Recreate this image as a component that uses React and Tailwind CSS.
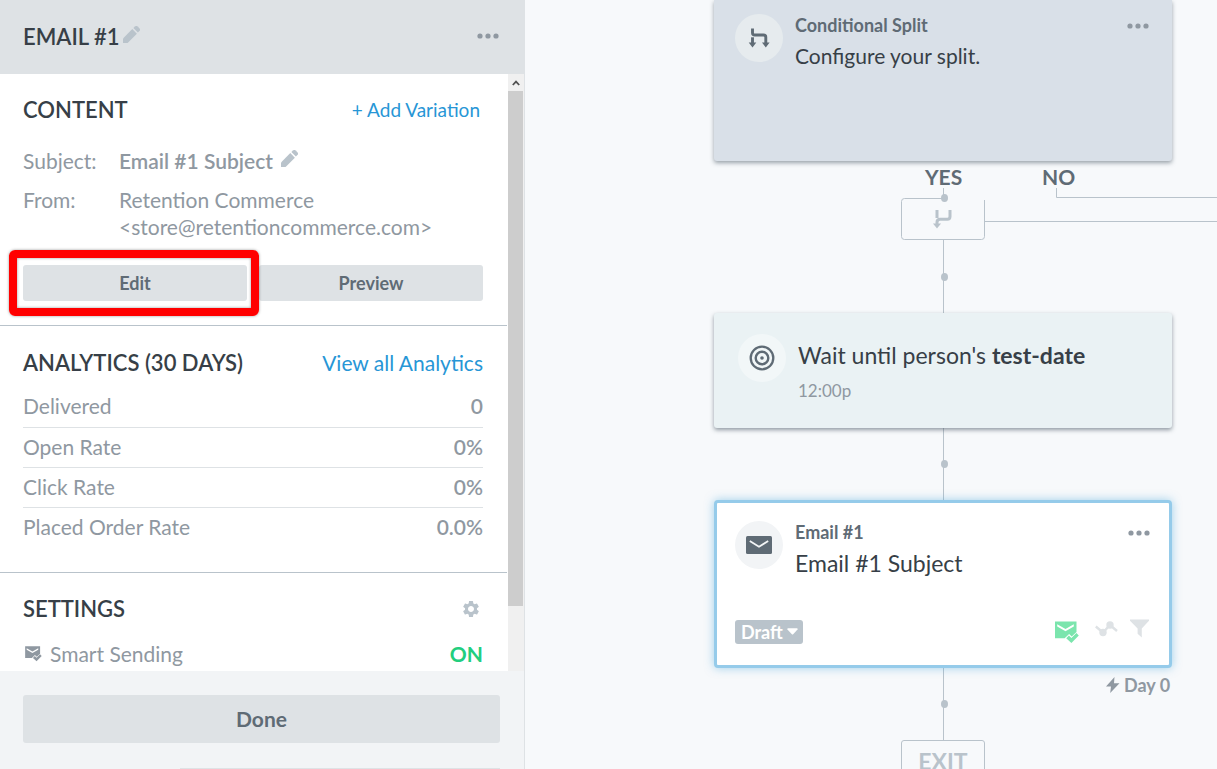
import { MdSettings } from "react-icons/md";

function Pencil() {
  return (
    <svg width="17" height="17" viewBox="0 0 17 17" fill="#b9c3cb" aria-hidden="true">
      <path d="M0 17v-4.6L9.300 3.100l4.600 4.600L4.600 17z" />
      <path d="M10.400 2.100L11.900.6a2 2 0 0 1 2.800 0l1.700 1.700a2 2 0 0 1 0 2.800l-1.500 1.500z" />
    </svg>
  );
}

function Dots() {
  return (
    <svg width="22" height="6" viewBox="0 0 22 6" fill="#8f98a1" aria-hidden="true">
      <circle cx="3" cy="3" r="2.6" />
      <circle cx="11" cy="3" r="2.6" />
      <circle cx="19" cy="3" r="2.6" />
    </svg>
  );
}

function MailCheck({ className }) {
  return (
    <svg viewBox="0 0 24 23" fill="currentColor" className={className} aria-hidden="true">
      <path fillRule="evenodd" d="M0 0.5h21.5v10.5l-4.8 4.6-2.6-2.6-4.4 4.3H0zM2.2 3.2v2.2l8.3 4.8 8.3-4.8V3.2l-8.3 4.8z" />
      <path d="M11.2 17.2l2.7-2.7 2.5 2.5 5-5 2.4 2.4-7.4 7.6z" />
    </svg>
  );
}

function Mail() {
  return (
    <svg width="26" height="18" viewBox="0 0 26 18" aria-hidden="true">
      <rect width="26" height="18" rx="1.5" fill="#5f6b75" />
      <path d="M3.8 5l9.2 5.8L22.2 5" fill="none" stroke="#f3f5f6" strokeWidth="1.8" />
    </svg>
  );
}

function SplitIcon() {
  return (
    <svg width="22" height="20" viewBox="0 0 22 20" aria-hidden="true">
      <path d="M4.500 0.500v4.200q0 2.300 2.300 2.300h8.700q2.300 0 2.300 2.300V15.500" fill="none" stroke="#5f6b75" strokeWidth="2.900" />
      <path d="M4.500 9.300v6" stroke="#5f6b75" strokeWidth="2.900" />
      <path d="M.7 14.600h7.600L4.500 19.500zM14 14.600h7.600L17.800 19.500z" fill="#5f6b75" />
    </svg>
  );
}

function MergeIcon() {
  return (
    <svg width="20" height="20" viewBox="0 0 20 20" aria-hidden="true">
      <path d="M4 1v8M17 1v6.500q0 2.700-2.700 2.700H7q-3 0-3 3V15" fill="none" stroke="#b9c3cb" strokeWidth="3" />
      <path d="M0 14.400h8L4 19.400z" fill="#b9c3cb" />
    </svg>
  );
}

function Target() {
  return (
    <svg width="26" height="26" viewBox="0 0 26 26" fill="none" stroke="#5f6b75" aria-hidden="true">
      <circle cx="13" cy="13" r="11.3" strokeWidth="2.3" />
      <circle cx="13" cy="13" r="6.3" strokeWidth="2.4" />
      <circle cx="13" cy="13" r="1.8" fill="#5f6b75" stroke="none" />
    </svg>
  );
}

const stats = [
  ["Delivered", "0"],
  ["Open Rate", "0%"],
  ["Click Rate", "0%"],
  ["Placed Order Rate", "0.0%"],
];

function SectionTitle({ children }) {
  return <h2 className="text-[22px] leading-[27px] font-semibold text-[#373f47]">{children}</h2>;
}

function Sidebar() {
  return (
    <aside className="flex w-[525px] shrink-0 flex-col border-r border-[#dee2e5] bg-[#f2f4f6]">
      <header className="flex h-[74px] shrink-0 items-center justify-between bg-[#dee2e5] pr-[25px] pb-[2px] pl-[23px]">
        <div className="flex items-center gap-1">
          <h1 className="text-[22px] leading-[27px] font-semibold text-[#373f47]">EMAIL #1</h1>
          <button aria-label="Rename email" className="pb-1"><Pencil /></button>
        </div>
        <button aria-label="Email options"><Dots /></button>
      </header>

      <div className="flex min-h-0 flex-1">
        <div className="min-w-0 flex-1 overflow-hidden bg-white text-[21px] leading-[27px] text-[#8f98a1]">
          <section className="border-b border-[#b9c3cb] pt-[22px] pr-6 pb-6 pl-[23px]">
            <div className="flex items-center justify-between pr-[3px]">
              <SectionTitle>CONTENT</SectionTitle>
              <a href="#variation" className="text-[19px] text-[#2796d6]">+ Add Variation</a>
            </div>
            <dl className="mt-6 grid grid-cols-[96px_1fr] gap-y-3">
              <dt>Subject:</dt>
              <dd className="flex items-center gap-2 font-semibold">
                Email #1 Subject
                <button aria-label="Edit subject" className="pb-1"><Pencil /></button>
              </dd>
              <dt>From:</dt>
              <dd>Retention Commerce<br />&lt;store@retentioncommerce.com&gt;</dd>
            </dl>
            <div className="mt-[25px] grid grid-cols-2 gap-3 text-lg font-bold text-[#5f6b75]">
              <div className="relative">
                <button className="h-9 w-full rounded-[3px] bg-[#dee2e5]">Edit</button>
                <div className="pointer-events-none absolute -inset-y-[15px] -right-3 -left-[14px] rounded-md border-8 border-[#ff0000] shadow-[0_0_3px_rgba(0,0,0,0.4),inset_0_0_3px_rgba(0,0,0,0.4)]" />
              </div>
              <button className="h-9 rounded-[3px] bg-[#dee2e5]">Preview</button>
            </div>
          </section>

          <section className="border-b border-[#b9c3cb] pt-[23px] pr-6 pb-[25px] pl-[23px]">
            <div className="flex items-center justify-between">
              <SectionTitle>ANALYTICS (30 DAYS)</SectionTitle>
              <a href="#analytics" className="text-[#2796d6]">View all Analytics</a>
            </div>
            <table className="mt-[11px] w-full border-collapse">
              <tbody>
                {stats.map(([name, value]) => (
                  <tr key={name} className="h-10 border-b border-[#dee2e5] last:border-0">
                    <th scope="row" className="p-0 pb-[2px] text-left font-normal">{name}</th>
                    <td className="p-0 pb-[2px] text-right font-semibold">{value}</td>
                  </tr>
                ))}
              </tbody>
            </table>
          </section>

          <section className="pt-[22px] pr-6 pl-[23px]">
            <div className="flex items-center justify-between pr-[2px]">
              <SectionTitle>SETTINGS</SectionTitle>
              <button aria-label="Settings"><MdSettings size={20} color="#b9c3cb" /></button>
            </div>
            <div className="mt-[18px] flex items-center justify-between">
              <span className="flex items-center gap-2"><MailCheck className="ml-[2px] h-4 w-[17px]" />Smart Sending</span>
              <span className="font-bold text-[#22ce7e]">ON</span>
            </div>
          </section>
        </div>
        <div className="flex w-[17px] shrink-0 flex-col border-l border-white bg-[#f0f0f0]" aria-hidden="true">
          <div className="flex h-[17px] w-[15px] shrink-0 items-center justify-center">
            <svg width="8" height="6" viewBox="0 0 8 6" fill="none" stroke="#505050" strokeWidth="1.8"><path d="M.8 5L4 1.6 7.2 5" /></svg>
          </div>
          <div className="h-[515px] w-[15px] bg-[#cdcdcd]" />
        </div>
      </div>

      <footer className="flex h-[98px] shrink-0 flex-col gap-[25px] overflow-hidden pt-6 pr-6 pl-[23px]">
        <button className="h-12 shrink-0 rounded-[3px] bg-[#dee2e5] text-[21px] font-bold text-[#5f6b75]">Done</button>
        <div className="ml-[157px] h-px bg-[#dee2e5]" />
      </footer>
    </aside>
  );
}

function Canvas() {
  return (
    <main className="relative min-w-0 flex-1 overflow-hidden bg-[#f7f9fb] text-[#373f47]">
      <svg className="absolute top-0 left-0 h-full w-full" fill="none" stroke="#b9c3cb" aria-hidden="true">
        <path d="M418.5 188v10M418.5 240v500" />
        <path d="M418 198.5H379.5Q376.5 198.5 376.5 201.5V236.5Q376.5 239.5 379.5 239.5H456.5Q459.5 239.5 459.5 236.5V200M460 221.5H3000M531.5 188V197.5H3000" />
        <g fill="#b9c3cb" stroke="none">
          <ellipse cx="419.5" cy="198" rx="3.5" ry="4" />
          <ellipse cx="419.5" cy="277" rx="3.5" ry="4" />
          <ellipse cx="419.5" cy="464" rx="3.5" ry="4" />
          <ellipse cx="419.5" cy="704" rx="3.5" ry="4" />
        </g>
      </svg>

      <article className="absolute top-0 left-[189px] flex h-[161px] w-[458px] gap-3 rounded-b-[3px] bg-[#d9e0e8] pt-[14px] pr-[23px] pl-[21px] shadow-[0_2px_4px_rgba(60,75,90,0.5)]">
        <div className="flex size-12 shrink-0 items-center justify-center rounded-full bg-[#e6ebee]"><SplitIcon /></div>
        <div className="flex-1">
          <h3 className="text-lg leading-[22px] font-bold text-[#5f6b75]">Conditional Split</h3>
          <p className="mt-[6px] text-[21px] leading-7">Configure your split.</p>
        </div>
        <button aria-label="Split options" className="h-6"><Dots /></button>
      </article>

      <span className="absolute top-[165px] left-[400px] text-[21px] leading-6 font-bold text-[#5f6b75]">YES</span>
      <span className="absolute top-[165px] left-[517px] text-[21px] leading-6 font-bold text-[#5f6b75]">NO</span>
      <div className="absolute top-[209px] left-[408px]"><MergeIcon /></div>

      <article className="absolute top-[313px] left-[189px] flex h-[115px] w-[458px] gap-3 rounded-[3px] bg-[#eaf2f4] pt-[21px] pl-6 shadow-[0_2px_4px_rgba(60,75,90,0.55)]">
        <div className="flex size-12 shrink-0 items-center justify-center rounded-full bg-[#f2f7f8]"><Target /></div>
        <div>
          <h3 className="text-[23px] leading-[42px]">Wait until person's <b>test-date</b></h3>
          <p className="mt-[3px] text-[17px] leading-6 text-[#8f98a1]">12:00p</p>
        </div>
      </article>

      <article className="absolute top-[500px] left-[189px] flex h-[168px] w-[458px] flex-col justify-between rounded border-[3px] border-[#95cbea] bg-white px-[18px] pt-[18px] pb-[21px] shadow-[0_0_10px_rgba(70,165,220,0.5)]">
        <div className="flex gap-3">
          <div className="flex size-12 shrink-0 items-center justify-center rounded-full bg-[#f2f4f6]"><Mail /></div>
          <div className="flex-1">
            <h3 className="text-lg leading-[22px] font-bold text-[#5f6b75]">Email #1</h3>
            <p className="mt-[6px] text-[23px] leading-7">Email #1 Subject</p>
          </div>
          <button aria-label="Email card options" className="mr-px h-6"><Dots /></button>
        </div>
        <div className="flex items-center justify-between">
          <button className="flex h-6 items-center gap-1 rounded-[3px] bg-[#b9c3cb] pr-[5px] pl-[6px] text-lg font-bold text-white">
            Draft
            <svg width="11" height="7" viewBox="0 0 12 7" fill="currentColor" aria-hidden="true"><path d="M1 0h10q1 .3.5 1.200L6.700 6.500q-.7.7-1.400 0L.5 1.200Q0 .3 1 0z" /></svg>
          </button>
          <div className="flex items-start gap-3 pr-[2px]">
            <MailCheck className="mt-[2px] mr-1 h-[23px] w-6 text-[#7be5ad]" />
            <svg width="23" height="16" viewBox="0 0 23 16" className="mt-[2px]" aria-hidden="true">
              <path d="M.8 5.5L8 11.5 15 4l7 6" fill="none" stroke="#dee2e5" strokeWidth="2.4" />
              <circle cx="8" cy="11.5" r="3.7" fill="#dee2e5" />
              <circle cx="15" cy="4" r="3.7" fill="#dee2e5" />
            </svg>
            <svg width="19" height="19" viewBox="0 0 20 19" fill="#dee2e5" aria-hidden="true"><path d="M0 0h20v1.300L12.400 9.500V19L8 15V9.500L0 1.300z" /></svg>
          </div>
        </div>
      </article>

      <div className="absolute top-[673px] left-[581px] flex items-center gap-1 text-lg leading-6 font-bold text-[#8f98a1]">
        <svg width="14" height="16" viewBox="0 0 14 16" fill="currentColor" aria-hidden="true"><path d="M8.5 0L0 9.400h5L4.200 16 13.500 6.200H8z" /></svg>
        Day 0
      </div>

      <div className="absolute top-[740px] left-[376px] flex h-[42px] w-[84px] items-center justify-center rounded-[3px] border border-[#b9c3cb] text-[23px] font-bold text-[#b9c3cb]">EXIT</div>
    </main>
  );
}

export default function App() {
  return (
    <div className="flex h-screen overflow-hidden font-['Lato',sans-serif]">
      <Sidebar />
      <Canvas />
    </div>
  );
}
